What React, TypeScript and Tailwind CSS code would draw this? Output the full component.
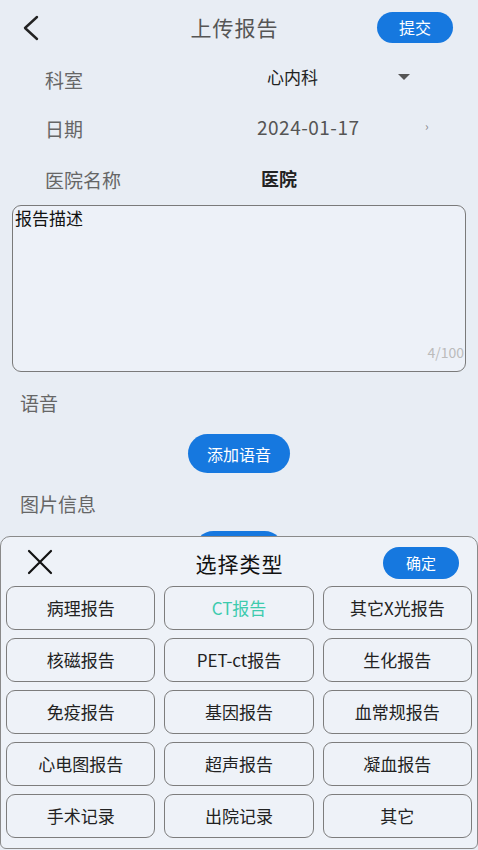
import { useState } from 'react';

const REPORT_TYPES = [
  '病理报告', 'CT报告', '其它X光报告',
  '核磁报告', 'PET-ct报告', '生化报告',
  '免疫报告', '基因报告', '血常规报告',
  '心电图报告', '超声报告', '凝血报告',
  '手术记录', '出院记录', '其它',
];

const FONT = "font-['Noto_Sans_CJK_SC','Noto_Sans',sans-serif]";

export default function App() {
  const [selected, setSelected] = useState('CT报告');
  const [desc, setDesc] = useState('报告描述');

  return (
    <div className={`relative w-[478px] h-[850px] overflow-hidden bg-[#e8edf4] ${FONT}`}>
      {/* Header */}
      <header className="h-[55px] flex items-center px-5">
        <svg width="18" height="26" viewBox="0 0 18 26" className="ml-[2px]">
          <path d="M15 2 L3 13 L15 24" fill="none" stroke="#222" strokeWidth="2.4" strokeLinecap="round" strokeLinejoin="round" />
        </svg>
        <div className="flex-1 text-center text-[21px] text-[#555] tracking-[1px] ml-[52px]">上传报告</div>
        <button className="w-[76px] h-[31px] rounded-full bg-[#1678df] text-white text-[16px] mr-[5px] mb-[1px]">
          提交
        </button>
      </header>

      {/* Form rows */}
      <div className="flex flex-col">
        <div className="h-[49px] flex items-center pl-[45px]">
          <span className="w-[222px] text-[19px] text-[#666] pt-[1px]">科室</span>
          <span className="text-[17px] text-[#222] w-[130px] -mt-[5px]">心内科</span>
          <svg width="14" height="8" viewBox="0 0 14 8" className="-mt-[5px]">
            <path d="M1 1 L13 1 L7 7 Z" fill="#555" />
          </svg>
        </div>
        <div className="h-[50px] flex items-center pl-[45px]">
          <span className="w-[212px] text-[19px] text-[#666]">日期</span>
          <span className="text-[19px] text-[#555] w-[168px] -mt-[4px] tracking-[0.5px]">2024-01-17</span>
          <span className="text-[12px] text-[#888] -mt-[6px]">›</span>
        </div>
        <div className="h-[51px] flex items-center pl-[45px]">
          <span className="w-[216px] text-[19px] text-[#666] pt-[1px]">医院名称</span>
          <span className="text-[18px] font-bold text-[#222] -mt-[2px]">医院</span>
        </div>
      </div>

      {/* Description */}
      <div className="mx-[12px] h-[167px] rounded-[9px] border border-[#7a7a7a] bg-[#edf1f8] flex flex-col">
        <textarea
          value={desc}
          onChange={(e) => setDesc(e.target.value)}
          className="flex-1 bg-transparent resize-none outline-none px-[2px] text-[17px] leading-[24px] text-[#111]"
        />
        <div className="text-right text-[14px] text-[#bbb] pb-[8px] pr-[1px]">{desc.length}/100</div>
      </div>

      {/* Voice */}
      <div className="pl-[20px] mt-[17px] text-[19px] text-[#666] leading-[28px]">语音</div>
      <div className="flex justify-center mt-[17px]">
        <button className="w-[102px] h-[39px] rounded-full bg-[#1678df] text-white text-[16px]">添加语音</button>
      </div>

      {/* Images */}
      <div className="pl-[20px] mt-[17px] text-[19px] text-[#666] leading-[28px]">图片信息</div>
      <div className="flex justify-center mt-[13px]">
        <button aria-label="添加图片" className="w-[90px] h-[39px] rounded-full bg-[#1678df]" />
      </div>

      {/* Bottom sheet */}
      <div className="absolute left-0 right-0 bottom-[1px] h-[313px] bg-[#eef2f8] border border-[#8a8a8a] rounded-t-[10px] rounded-b-[6px] flex flex-col">
        <div className="h-[49px] flex items-center px-[25px]">
          <svg width="28" height="28" viewBox="0 0 28 28">
            <path d="M3 3 L25 25 M25 3 L3 25" stroke="#111" strokeWidth="2.2" strokeLinecap="round" />
          </svg>
          <div className="flex-1 text-center text-[21px] text-[#111] tracking-[1px] ml-[42px] pt-[4px]">选择类型</div>
          <button className="w-[76px] h-[32px] rounded-full bg-[#1678df] text-white text-[15px] -mr-[7px] mt-[3px]">确定</button>
        </div>
        <div className="grid grid-cols-3 gap-x-[9px] gap-y-[8px] px-[5px]">
          {REPORT_TYPES.map((t) => (
            <button
              key={t}
              onClick={() => setSelected(t)}
              className={`h-[44px] rounded-[9px] border border-[#7d7d7d] bg-[#eef2f8] text-[17px] ${
                selected === t ? 'text-[#3dcbae]' : 'text-[#222]'
              }`}
            >
              {t}
            </button>
          ))}
        </div>
      </div>
    </div>
  );
}
